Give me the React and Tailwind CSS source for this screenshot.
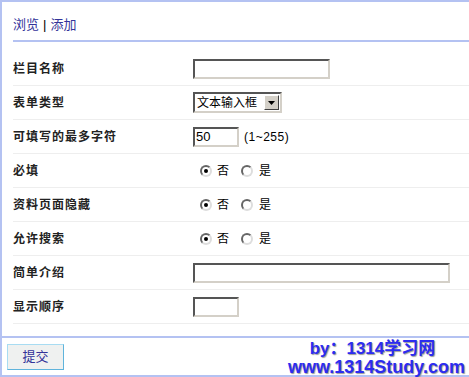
import React from 'react';

const font = { fontFamily: '"Liberation Sans", "Noto Sans CJK SC", sans-serif' };

function TextBox({ w, value = '' }) {
  return (
    <div
      className={`${w} h-[20px] bg-white border-2 border-t-[#555] border-l-[#555] border-b-[#d4d0c8] border-r-[#d4d0c8] text-[13px] leading-[16px] pl-[1px] text-black`}
    >
      {value}
    </div>
  );
}

function Radio({ checked }) {
  return (
    <span className="w-[12px] h-[12px] rounded-full bg-white border-2 border-t-[#666] border-l-[#666] border-b-[#ddd] border-r-[#ddd] flex items-center justify-center">
      {checked && <span className="w-[4px] h-[4px] rounded-full bg-black" />}
    </span>
  );
}

function YesNo() {
  return (
    <div className="flex items-center pl-[7px] text-[12px] text-black">
      <Radio checked />
      <span className="ml-[5px]">否</span>
      <span className="ml-[12px]"><Radio /></span>
      <span className="ml-[6px]">是</span>
    </div>
  );
}

function Row({ label, children }) {
  return (
    <div className="flex items-center h-[34px] border-b border-[#eeeeee]">
      <div className="w-[180px] text-[12px] font-bold tracking-[1px] text-[#222]">{label}</div>
      <div className="flex items-center">{children}</div>
    </div>
  );
}

export default function App() {
  return (
    <div style={font} className="relative w-[469px] h-[377px] bg-white border-l-2 border-t-2 border-[#b4c2f2] flex flex-col">
      <div className="ml-[11px] h-[40px] border-b-2 border-[#b4c2f2] flex items-end pb-[6px] text-[13px] text-[#333399]">
        <span>浏览</span>
        <span className="mx-[4px] text-black">|</span>
        <span>添加</span>
      </div>

      <div className="ml-[11px] mt-[10px]">
        <Row label="栏目名称">
          <TextBox w="w-[137px]" />
        </Row>
        <Row label="表单类型">
          <div className="w-[89px] h-[21px] bg-white border-2 border-t-[#555] border-l-[#555] border-b-[#d4d0c8] border-r-[#d4d0c8] flex items-center justify-between text-[12px] text-black">
            <span className="pl-[2px]">文本输入框</span>
            <span className="w-[15px] h-[15px] mr-[1px] bg-[#d4d0c8] border border-t-white border-l-white border-b-[#404040] border-r-[#404040] flex items-center justify-center">
              <svg width="7" height="4" viewBox="0 0 7 4">
                <path d="M0 0h7L3.5 4z" fill="#000" />
              </svg>
            </span>
          </div>
        </Row>
        <Row label="可填写的最多字符">
          <TextBox w="w-[46px]" value="50" />
          <span className="ml-[5px] text-[12px] tracking-[0.5px] text-black">(1~255)</span>
        </Row>
        <Row label="必填">
          <YesNo />
        </Row>
        <Row label="资料页面隐藏">
          <YesNo />
        </Row>
        <Row label="允许搜索">
          <YesNo />
        </Row>
        <Row label="简单介绍">
          <TextBox w="w-[257px]" />
        </Row>
        <Row label="显示顺序">
          <TextBox w="w-[46px]" />
        </Row>
      </div>

      <div className="mt-[12px] border-t-2 border-[#b4c2f2] flex-1 border-b-2 pl-[5px] pt-[6px]">
        <button className="w-[57px] h-[26px] bg-[#eff1f0] border border-t-[#a8dcf2] border-l-[#a8dcf2] border-b-[#5fb4dc] border-r-[#5fb4dc] text-[13px] text-[#333399]">
          提交
        </button>
      </div>

      <div className="absolute right-[4px] bottom-0 text-center font-bold text-[17px] leading-[19px] text-[#2c2cf0] [text-shadow:1px_1px_1px_#999]">
        <div className="pr-[8px]">by：1314学习网</div>
        <div className="text-[18px]">www.1314Study.com</div>
      </div>
    </div>
  );
}
